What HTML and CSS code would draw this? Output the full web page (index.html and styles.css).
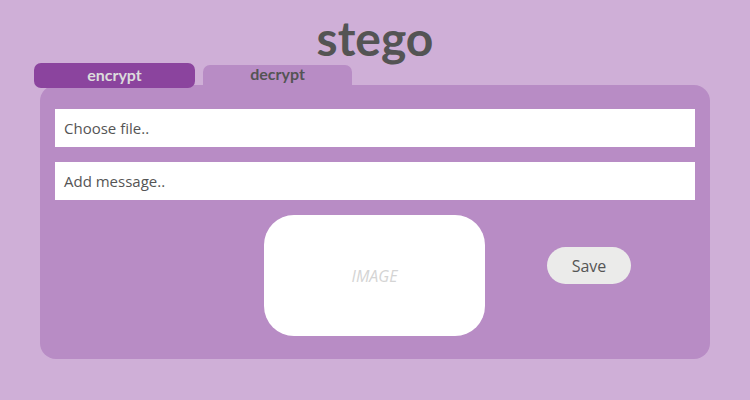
FILE: index.html
```html
<!DOCTYPE html>
<html>
<head>
<meta charset="utf-8">
<link rel="stylesheet" href="styles.css">
</head>
<body>
<div class="page">
  <h1 class="title">stego</h1>
  <div class="tabs">
    <div class="tab tab-active">encrypt</div>
    <div class="tab tab-idle">decrypt</div>
  </div>
  <div class="panel">
    <div class="field">Choose file..</div>
    <div class="field">Add message..</div>
    <div class="bottom-row">
      <div class="image-box">IMAGE</div>
      <div class="save-btn">Save</div>
    </div>
  </div>
</div>
</body>
</html>
```
FILE: styles.css
```css
html, body {
  margin: 0;
  padding: 0;
}
body {
  width: 750px;
  height: 400px;
  background: #cfafd7;
  font-family: "Open Sans", "Noto Sans", sans-serif;
  overflow: hidden;
}
.page {
  display: flex;
  flex-direction: column;
}
.title {
  margin: 13px 0 0 0;
  height: 50px;
  line-height: 50px;
  font-family: Lato, sans-serif;
  font-weight: 700;
  font-size: 48px;
  color: #545454;
  text-align: center;
}
.tabs {
  display: flex;
  gap: 8px;
  padding-left: 34px;
  height: 22px;
}
.tab {
  font-family: Lato, sans-serif;
  font-weight: 700;
  font-size: 16px;
  display: flex;
  justify-content: center;
  box-sizing: border-box;
}
.tab-active {
  width: 161px;
  height: 25px;
  line-height: 24px;
  background: #8b449e;
  color: #dcdcdc;
  border-radius: 7px;
  position: relative;
  z-index: 1;
}
.tab-idle {
  width: 149px;
  height: 22px;
  margin-top: 2px;
  line-height: 18px;
  background: #b88cc5;
  color: #545454;
  border-radius: 7px 7px 0 0;
}
.panel {
  margin: 0 40px;
  background: #b88cc5;
  border-radius: 16px;
  padding: 24px 15px 23px 15px;
  display: flex;
  flex-direction: column;
  gap: 15px;
}
.field {
  height: 38px;
  background: #ffffff;
  color: #555555;
  font-size: 15px;
  line-height: 38px;
  padding-left: 9px;
  box-sizing: border-box;
}
.bottom-row {
  display: flex;
  align-items: flex-start;
  padding-left: 209px;
  gap: 62px;
}
.image-box {
  width: 221px;
  height: 121px;
  background: #ffffff;
  border-radius: 30px;
  display: flex;
  align-items: center;
  justify-content: center;
  font-style: italic;
  font-size: 16px;
  color: #d4d4d4;
}
.save-btn {
  margin-top: 32px;
  width: 84px;
  height: 37px;
  border-radius: 19px;
  background: #ebebea;
  color: #555555;
  font-size: 16px;
  display: flex;
  align-items: center;
  justify-content: center;
}
```
